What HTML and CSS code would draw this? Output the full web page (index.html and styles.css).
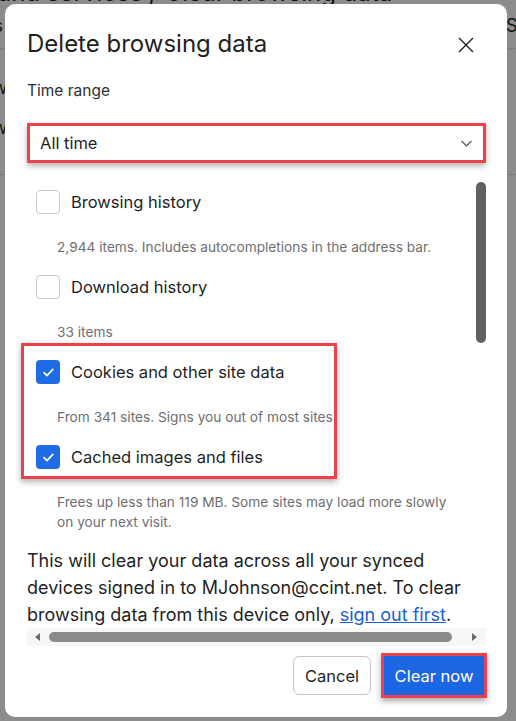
FILE: index.html
```html
<!DOCTYPE html>
<html lang="en">
<head>
<meta charset="utf-8">
<title>Delete browsing data</title>
<link rel="stylesheet" href="styles.css">
</head>
<body>
<div class="page">
  <div class="crumb">und services / Clear browsing data</div>
  <div class="tabs"><span class="tab-left">Settings</span><span class="tab-right">Site</span></div>
  <div class="bg-row">Show</div>
  <div class="bg-row bg-row-last">New</div>
</div>
<div class="overlay"></div>

<div class="dialog" role="dialog">
  <div class="dlg-head">
    <h1 class="dlg-title">Delete browsing data</h1>
    <button class="close" aria-label="Close">
      <svg width="16" height="16" viewBox="0 0 16 16"><path d="M1 1L15 15M15 1L1 15" stroke="#1f1f1f" stroke-width="1.4" fill="none"/></svg>
    </button>
  </div>

  <div class="range-label">Time range</div>
  <div class="select">
    <span>All time</span>
    <svg width="11" height="7" viewBox="0 0 11 7"><path d="M0.5 0.8L5.5 5.8L10.5 0.8" stroke="#474747" stroke-width="1.2" fill="none"/></svg>
  </div>

  <div class="scroller">
    <div class="scroll-body">
      <div class="opts">
        <div class="opt">
          <div class="opt-row"><span class="box"></span><span class="opt-label">Browsing history</span></div>
          <div class="opt-desc">2,944 items. Includes autocompletions in the address bar.</div>
        </div>
        <div class="opt">
          <div class="opt-row"><span class="box"></span><span class="opt-label">Download history</span></div>
          <div class="opt-desc">33 items</div>
        </div>
        <div class="opt">
          <div class="opt-row"><span class="box box-on"><svg width="24" height="24" viewBox="0 0 24 24"><path d="M8 12.6L11 15.6L16.8 9.4" stroke="#fff" stroke-width="1.7" fill="none" stroke-linecap="round" stroke-linejoin="round"/></svg></span><span class="opt-label">Cookies and other site data</span></div>
          <div class="opt-desc">From 341 sites. Signs you out of most sites.</div>
        </div>
        <div class="opt">
          <div class="opt-row"><span class="box box-on"><svg width="24" height="24" viewBox="0 0 24 24"><path d="M8 12.6L11 15.6L16.8 9.4" stroke="#fff" stroke-width="1.7" fill="none" stroke-linecap="round" stroke-linejoin="round"/></svg></span><span class="opt-label">Cached images and files</span></div>
          <div class="opt-desc">Frees up less than 119 MB. Some sites may load more slowly on your next visit.</div>
        </div>
        <div class="highlight"></div>
      </div>
      <p class="sync">This will clear your data across all your synced devices signed in to MJohnson@ccint.net. To clear browsing data from this device only, <a href="#">sign out first</a>.</p>
    </div>
    <div class="vbar"><div class="vthumb"></div></div>
    <div class="hbar">
      <span class="arrow arrow-left"></span>
      <span class="hthumb"></span>
      <span class="arrow arrow-right"></span>
    </div>
  </div>

  <div class="actions">
    <button class="btn btn-cancel">Cancel</button>
    <button class="btn btn-primary">Clear now</button>
  </div>
</div>
</body>
</html>
```

FILE: styles.css
```css
* { box-sizing: border-box; }

html, body {
  margin: 0;
  padding: 0;
  width: 516px;
  height: 721px;
  overflow: hidden;
  background: #ffffff;
  font-family: Inter, Roboto, "Liberation Sans", Arial, sans-serif;
  color: #1f1f1f;
}

/* background settings page */
.page {
  width: 516px;
  overflow: hidden;
}

.crumb {
  font-size: 24px;
  line-height: 34px;
  margin-top: -24px;
  margin-left: -3px;
  height: 31px;
  white-space: nowrap;
  color: #1f1f1f;
}

.tabs {
  display: flex;
  justify-content: space-between;
  height: 42px;
  padding-top: 6px;
  border-bottom: 1px solid #e3e3e3;
  font-size: 18px;
  line-height: 26px;
  white-space: nowrap;
}

.tab-left { margin-left: -66px; }
.tab-right { margin-right: -22px; }

.bg-row {
  height: 40px;
  font-size: 18px;
  line-height: 26px;
  padding-top: 26px;
  margin-left: -40px;
  white-space: nowrap;
}

.bg-row-last {
  height: 86px;
  margin-left: -31px;
  border-bottom: 1px solid #e3e3e3;
}

.overlay {
  position: fixed;
  inset: 0;
  background: rgba(0, 0, 0, 0.45);
}

/* dialog */
.dialog {
  position: fixed;
  left: 5px;
  top: 4px;
  width: 502px;
  height: 713px;
  background: #ffffff;
  border-radius: 10px;
  padding: 24px 21px 0 22px;
  display: flex;
  flex-direction: column;
}

.dlg-head {
  display: flex;
  align-items: center;
  justify-content: space-between;
  height: 32px;
}

.dlg-title {
  margin: 0;
  font-size: 24px;
  line-height: 32px;
  font-weight: 400;
  color: #1f1f1f;
}

.close {
  width: 40px;
  height: 40px;
  border: none;
  background: transparent;
  padding: 0;
  display: flex;
  align-items: center;
  justify-content: center;
  margin-top: 2px;
}

.range-label {
  margin-top: 21px;
  font-size: 15.5px;
  line-height: 20px;
  color: #303030;
}

.select {
  margin-top: 22px;
  height: 40px;
  border: 3px solid #ef4149;
  box-shadow: 0 3px 6px rgba(0, 0, 0, 0.3);
  display: flex;
  align-items: center;
  justify-content: space-between;
  padding: 0 11px 0 10px;
  font-size: 16.5px;
  color: #1f1f1f;
}

/* scroll region */
.scroller {
  margin-top: 12px;
  display: grid;
  grid-template-columns: 1fr 10px;
  grid-template-rows: auto 18px;
}

.scroll-body {
  padding-top: 15px;
  min-width: 0;
}

.opts {
  position: relative;
}

.opt {
  padding-left: 9px;
  padding-bottom: 18px;
}

.opt-row {
  display: flex;
  align-items: center;
  gap: 11px;
  height: 24px;
}

.box {
  width: 24px;
  height: 24px;
  flex: none;
  border: 1px solid #c9c9c9;
  border-radius: 4px;
  background: #fff;
}

.box-on {
  border: none;
  background: #1f6be6;
  display: flex;
}

.opt-label {
  font-size: 16.5px;
  color: #1f1f1f;
}

.opt-desc {
  margin-top: 23px;
  padding-left: 21px;
  font-size: 13.7px;
  line-height: 20px;
  color: #6f6f6f;
  max-width: 420px;
}

.highlight {
  position: absolute;
  left: -6px;
  top: 153px;
  width: 316px;
  height: 136px;
  border: 3px solid #ef4149;
  box-shadow: 0 3px 6px rgba(0, 0, 0, 0.3);
}

.sync {
  margin: -3px 0 0 0;
  font-size: 18px;
  line-height: 27px;
  color: #1f1f1f;
}

.sync a {
  color: #1a5dd6;
  text-decoration: underline;
}

.vbar {
  grid-column: 2;
  grid-row: 1;
}

.vthumb {
  margin-top: 7px;
  height: 161px;
  width: 10px;
  border-radius: 5px;
  background: #606060;
}

.hbar {
  grid-column: 1 / 3;
  grid-row: 2;
  background: #f7f7f7;
  display: flex;
  align-items: center;
  padding: 0 9px 0 8px;
}

.arrow {
  width: 0;
  height: 0;
  border-top: 4px solid transparent;
  border-bottom: 4px solid transparent;
}

.arrow-left {
  border-right: 5px solid #6a6a6a;
}

.arrow-right {
  border-left: 5px solid #6a6a6a;
  margin-left: auto;
}

.hthumb {
  margin-left: 9px;
  width: 403px;
  height: 10px;
  border-radius: 5px;
  background: #8a8a8a;
}

/* actions */
.actions {
  margin-top: 7px;
  display: flex;
  justify-content: flex-end;
  align-items: center;
  gap: 10px;
}

.btn {
  font-family: inherit;
  font-size: 16.5px;
  cursor: pointer;
}

.btn-cancel {
  width: 78px;
  height: 39px;
  border: 1px solid #c7c7c7;
  border-radius: 6px;
  background: #fff;
  color: #1f1f1f;
}

.btn-primary {
  width: 106px;
  height: 45px;
  border: 3px solid #ef4149;
  background: #1c66e4;
  background-clip: padding-box;
  color: #ffffff;
  box-shadow: 0 3px 6px rgba(0, 0, 0, 0.35);
  margin-right: -1px;
}
```
